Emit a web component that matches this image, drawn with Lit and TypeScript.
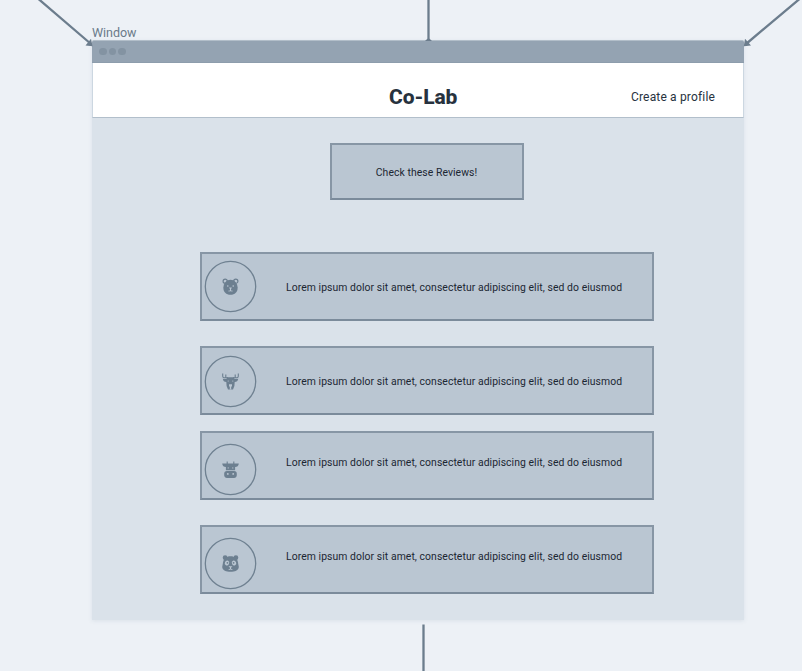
import { LitElement, html, css, svg } from "lit";
import { customElement, property } from "lit/decorators.js";
import { classMap } from "lit/directives/class-map.js";

type Animal = "bear" | "deer" | "cow" | "panda";

interface Review {
  animal: Animal;
  text: string;
  low: boolean;
}

const LOREM = "Lorem ipsum dolor sit amet, consectetur adipiscing elit, sed do eiusmod";

const REVIEWS: Review[] = [
  { animal: "bear", text: LOREM, low: false },
  { animal: "deer", text: LOREM, low: false },
  { animal: "cow", text: LOREM, low: true },
  { animal: "panda", text: LOREM, low: true },
];

const ICONS = {
  bear: svg`
    <circle class="ring" cx="3.2" cy="3.2" r="2.1"/><circle class="ring" cx="13.8" cy="3.2" r="2.1"/>
    <path d="M8.5 1.8C12.6 1.8 15.2 5 15.6 9.2C16 13.8 12.7 16.8 8.5 16.8S1 13.8 1.4 9.2C1.8 5 4.4 1.8 8.5 1.8Z"/>
    <circle class="cut" cx="5.8" cy="8" r=".8"/><circle class="cut" cx="11.2" cy="8" r=".8"/>
    <path class="cut" d="M7.1 9.6h2.8L9 11.2v1.3l1.8.3-.4.8-1.9-.3-1.9.3-.4-.8 1.8-.3v-1.3Z"/>`,
  deer: svg`
    <path class="line" d="M.7.4V3.2Q.7 4.7 2.4 4.7H6M3.8 1.5V4.7M16.3.4V3.2Q16.3 4.7 14.6 4.7H11M13.2 1.5V4.7"/>
    <path d="M5 4.3h7l.6 1.6 3.6-.1c-.3 2.2-1.6 3.2-3.5 3.2L12.4 13l-1.4 3.4H6L4.6 13 4.3 9c-1.9 0-3.2-1-3.5-3.2l3.6.1Z"/>
    <path class="cut" d="M7 11.2h3v1.9l-.8.8v2.6H7.8v-2.6L7 13.1Z"/>
    <circle class="cut" cx="6.2" cy="8" r=".6"/><circle class="cut" cx="10.8" cy="8" r=".6"/>`,
  cow: svg`
    <path class="line" d="M5.2.6V3M11.8.6V3"/>
    <path d="M.2 2.5h16.6c-.2 2.3-1.6 3.6-3.7 3.6V9.2H3.9V6.1C1.8 6.1.4 4.8.2 2.5Z"/>
    <rect x="2.2" y="9.9" width="12.6" height="7" rx="2.8"/>
    <circle class="cut" cx="6.2" cy="6.9" r=".6"/><circle class="cut" cx="10.8" cy="6.9" r=".6"/>
    <circle class="cut" cx="5.8" cy="12.9" r=".95"/><circle class="cut" cx="11.2" cy="12.9" r=".95"/>`,
  panda: svg`
    <circle cx="3.1" cy="2.7" r="2.4"/><circle cx="13.9" cy="2.7" r="2.4"/>
    <path d="M8.5 1.2C13 1.2 15.2 3.4 16 7.5L16.8 12C16.5 15.4 12.8 16.8 8.5 16.8S.5 15.4.2 12L1 7.5C1.8 3.4 4 1.2 8.5 1.2Z"/>
    <ellipse class="cut" cx="5" cy="8" rx="2.1" ry="2.6" transform="rotate(25 5 8)"/>
    <ellipse class="cut" cx="12" cy="8" rx="2.1" ry="2.6" transform="rotate(-25 12 8)"/>
    <circle cx="5.4" cy="7.8" r=".9"/><circle cx="11.6" cy="7.8" r=".9"/>
    <path class="cut" d="M6.5 11.2h4L9 12.8v.9l1.6.5-.5.9-1.6-.5-1.6.5-.5-.9 1.6-.5v-.9Z"/>`,
};

@customElement("review-card")
export class ReviewCard extends LitElement {
  @property({ attribute: false }) review!: Review;

  static styles = css`
    :host { display: block; }
    .card {
      box-sizing: border-box;
      display: flex;
      height: 69px;
      padding: 6px 0 0 2px;
      border: 2px solid #8796a5;
      border-bottom-color: #7b8b9b;
      background: #bac6d2;
    }
    .avatar { flex: none; width: 53px; height: 53px; }
    .outline { fill: none; stroke: #6f8191; stroke-width: 1.3; }
    .icon { fill: #6c7f90; }
    .ring { fill: none; stroke: #6c7f90; stroke-width: 1.2; }
    .line { fill: none; stroke: #6c7f90; stroke-width: 1.1; }
    .cut { fill: #bac6d2; }
    .text {
      margin: 21px 0 0 29px;
      font: 400 10.4px/14px Roboto, sans-serif;
      letter-spacing: 0.065px;
      white-space: nowrap;
      color: #1c2733;
    }
    .deer .avatar { margin-top: 1px; }
    .low .avatar { margin-top: 4px; }
    .low .text { margin-top: 17px; }
  `;

  render() {
    const { animal, low, text } = this.review;
    return html`<div class=${classMap({ card: true, low, [animal]: true })}>
      <svg class="avatar" viewBox="0 0 53 53">
        <circle class="outline" cx="26.5" cy="26.5" r="25.2"/>
        <g class="icon" transform="translate(18 18)">${ICONS[animal]}</g>
      </svg>
      <div class="text">${text}</div>
    </div>`;
  }
}

@customElement("app-root")
export class AppRoot extends LitElement {
  static styles = css`
    :host {
      display: block;
      position: relative;
      box-sizing: border-box;
      width: 802px;
      height: 671px;
      padding: 25px 0 0 92px;
      overflow: hidden;
      background: #edf1f6;
      color: #27323e;
      font-family: Roboto, sans-serif;
    }
    .links { position: absolute; left: 0; top: 0; width: 802px; height: 671px; }
    .link { fill: none; stroke: #6c7d8d; stroke-width: 2.3; }
    .tip { fill: #6c7d8d; }
    .label { height: 15px; font-size: 12.5px; line-height: 16px; letter-spacing: -0.05px; color: #6a7a89; }
    .window {
      width: 652px;
      height: 580px;
      border-radius: 2px 2px 0 0;
      background: #dae2ea;
      box-shadow: 0 1px 4px rgba(90, 115, 140, 0.12);
    }
    .bar {
      box-sizing: border-box;
      display: flex;
      align-items: center;
      gap: 2px;
      height: 23px;
      padding-left: 7px;
      border-top: 1px solid #b2bec9;
      border-bottom: 1px solid #8d9dac;
      border-radius: 2px 2px 0 0;
      background: #94a3b2;
    }
    .dot { width: 7.6px; height: 7.6px; border-radius: 50%; background: #8393a2; }
    .header {
      box-sizing: border-box;
      display: grid;
      grid-template-columns: 296px 242px 1fr;
      height: 55px;
      padding-top: 20px;
      border: 1px solid #ccd7e1;
      border-width: 0 1px 1px;
      border-bottom-color: #b2bfcb;
      background: #fff;
      line-height: 28px;
      white-space: nowrap;
    }
    .title { grid-column: 2; font-size: 21px; font-weight: 800; letter-spacing: -0.1px; line-height: 29px; }
    .profile { font-size: 12px; font-weight: 400; letter-spacing: 0.17px; }
    .content { display: flex; flex-direction: column; padding: 25px 90px 0 108px; }
    .notice {
      box-sizing: border-box;
      display: flex;
      align-items: center;
      justify-content: center;
      align-self: center;
      width: 194px;
      height: 57px;
      padding: 2px 1px 0 0;
      border: 2px solid #8796a5;
      border-bottom-color: #7b8b9b;
      background: #bac6d2;
      font-size: 10.4px;
      letter-spacing: 0.065px;
      color: #1c2733;
    }
    .notice-text { white-space: nowrap; }
    .reviews { display: flex; flex-direction: column; gap: 16px; margin-top: 52px; }
    .pair { display: flex; flex-direction: column; gap: 25px; }
  `;

  render() {
    const card = (review: Review) => html`<review-card .review=${review}></review-card>`;
    return html`
      <div class="label"><span class="label-text">Window</span></div>
      <div class="window">
        <div class="bar"><i class="dot"></i><i class="dot"></i><i class="dot"></i></div>
        <div class="header">
          <div class="title"><span class="title-text">Co-Lab</span></div>
          <div class="profile">Create a profile</div>
        </div>
        <div class="content">
          <div class="notice"><span class="notice-text">Check these Reviews!</span></div>
          <div class="reviews">
            <div class="pair">${REVIEWS.slice(0, 2).map(card)}</div>
            <div class="pair">${REVIEWS.slice(2).map(card)}</div>
          </div>
        </div>
      </div>
      <svg class="links" viewBox="0 0 802 671">
        <path class="link" d="M38.5-1L91 44M428.5 0V40M799.5-1L746 44M423.5 624.5V671"/>
        <path class="tip" d="M92.5 46.2L85.5 45.5L91 38.8ZM743.8 46.2L751 45.5L745 38.8ZM425 41L427.4 38.8H429.6L432 41Z"/>
      </svg>
    `;
  }
}
